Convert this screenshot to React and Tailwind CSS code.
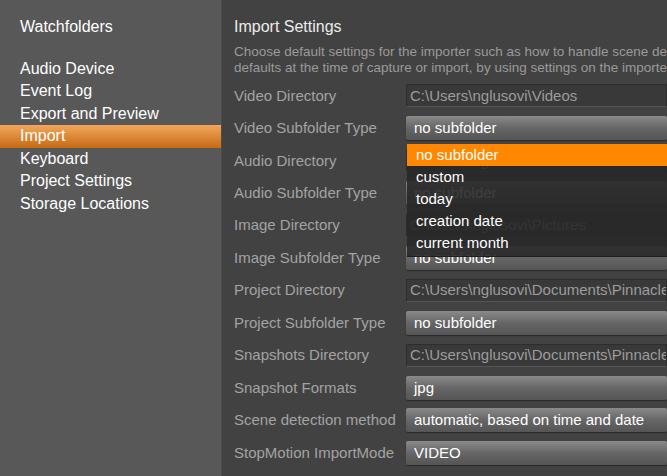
const navItems = [
  "Audio Device",
  "Event Log",
  "Export and Preview",
  "Import",
  "Keyboard",
  "Project Settings",
  "Storage Locations",
];

const rows = [
  { label: "Video Directory", type: "dir", value: "C:\\Users\\nglusovi\\Videos" },
  { label: "Video Subfolder Type", type: "select", value: "no subfolder" },
  { label: "Audio Directory", type: "dir", value: "C:\\Users\\nglusovi\\Music" },
  { label: "Audio Subfolder Type", type: "select", value: "no subfolder" },
  { label: "Image Directory", type: "dir", value: "C:\\Users\\nglusovi\\Pictures" },
  { label: "Image Subfolder Type", type: "select", value: "no subfolder" },
  { label: "Project Directory", type: "dir", value: "C:\\Users\\nglusovi\\Documents\\Pinnacle Studio\\Projects" },
  { label: "Project Subfolder Type", type: "select", value: "no subfolder" },
  { label: "Snapshots Directory", type: "dir", value: "C:\\Users\\nglusovi\\Documents\\Pinnacle Studio\\Snapshots" },
  { label: "Snapshot Formats", type: "select", value: "jpg" },
  { label: "Scene detection method", type: "select", value: "automatic, based on time and date" },
  { label: "StopMotion ImportMode", type: "select", value: "VIDEO" },
];

const options = ["no subfolder", "custom", "today", "creation date", "current month"];

function Field({ type, value }) {
  if (type === "dir") {
    return (
      <div className="h-[23px] w-[330px] border border-[#2e2e2e] border-b-[#555] bg-[#393939] pl-[3px] flex items-center text-[15px] text-[#9c9c9c] whitespace-nowrap overflow-hidden">
        {value}
      </div>
    );
  }
  return (
    <div className="h-6 w-[330px] rounded-[2px] bg-gradient-to-b from-[#8a8a8a] via-[#666] to-[#555] shadow-[0_1px_1px_#2a2a2a] pl-2 flex items-center text-[15px] text-white whitespace-nowrap overflow-hidden">
      {value}
    </div>
  );
}

export default function App() {
  return (
    <div
      className="flex w-[667px] h-[476px] overflow-hidden"
      style={{ fontFamily: '"Liberation Sans", Arial, sans-serif' }}
    >
      {/* Sidebar */}
      <nav className="w-[222px] shrink-0 bg-[#585858] border-r border-[#4c4c4c] pt-[16px] text-[16px] text-white">
        <div className="h-[22px] leading-[22px] pl-5">Watchfolders</div>
        <div className="mt-[19.5px]">
          {navItems.map((item) =>
            item === "Import" ? (
              <div
                key={item}
                className="h-[22.5px] leading-[22.5px] pl-5 bg-gradient-to-b from-[#f2a75a] to-[#c66a0c]"
              >
                {item}
              </div>
            ) : (
              <div key={item} className="h-[22.5px] leading-[22.5px] pl-5">
                {item}
              </div>
            )
          )}
        </div>
      </nav>

      {/* Main */}
      <main className="relative flex-1 bg-[#424242] pl-3 pt-[17px] whitespace-nowrap overflow-hidden">
        <h1 className="text-[16px] leading-[20px] text-[#ececec]">Import Settings</h1>
        <p className="mt-[7px] text-[13.5px] leading-[16px] text-[#9a9a9a]">
          Choose default settings for the importer such as how to handle scene detection. You can override these
          <br />
          defaults at the time of capture or import, by using settings on the importer itself.
        </p>
        <div className="mt-[3.75px] flex flex-col">
          {rows.map((r) => (
            <div key={r.label} className="h-[32.45px] flex items-center">
              <span className="w-[172px] shrink-0 text-[15px] text-[#a3a3a3]">{r.label}</span>
              <Field type={r.type} value={r.value} />
            </div>
          ))}
        </div>

        {/* Open dropdown */}
        <div className="absolute left-[185px] top-[144px] w-[320px] bg-[rgba(40,40,40,0.9)] border-b border-[#1e1e1e] pb-[2px]">
          {options.map((o, i) => (
            <div
              key={o}
              className={`h-[22px] leading-[22px] pl-[9px] text-[15px] text-white ${
                i === 0 ? "bg-[#ff8800]" : ""
              }`}
            >
              {o}
            </div>
          ))}
        </div>
      </main>
    </div>
  );
}
